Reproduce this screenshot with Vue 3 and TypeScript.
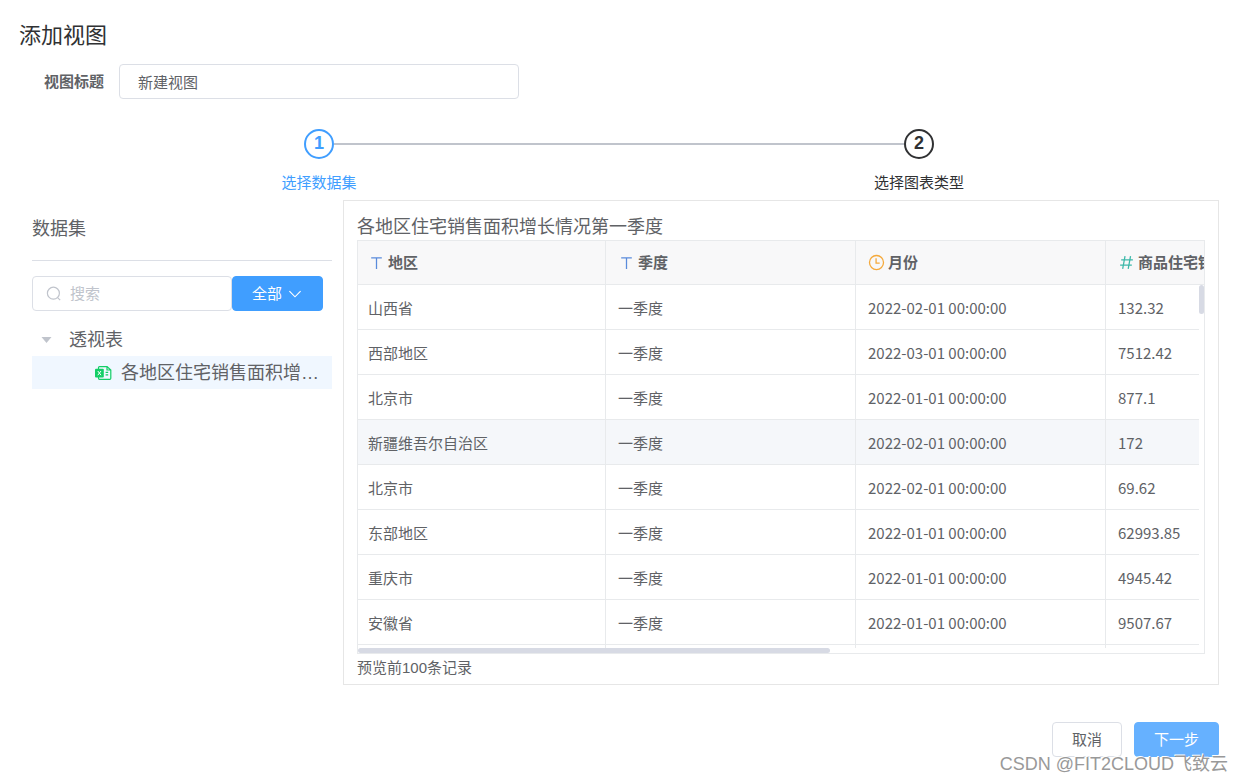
<script setup lang="ts">
import { ref } from 'vue'

type FieldKind = 'text' | 'time' | 'number'

interface Column {
  label: string
  kind: FieldKind
}

const viewTitle = ref('新建视图')
const keyword = ref('')

const steps = [
  { no: 1, label: '选择数据集', active: true },
  { no: 2, label: '选择图表类型', active: false },
]

const columns: Column[] = [
  { label: '地区', kind: 'text' },
  { label: '季度', kind: 'text' },
  { label: '月份', kind: 'time' },
  { label: '商品住宅销售面积', kind: 'number' },
]

const activeRow = 3
const rows: string[][] = [
  ['山西省', '一季度', '2022-02-01 00:00:00', '132.32'],
  ['西部地区', '一季度', '2022-03-01 00:00:00', '7512.42'],
  ['北京市', '一季度', '2022-01-01 00:00:00', '877.1'],
  ['新疆维吾尔自治区', '一季度', '2022-02-01 00:00:00', '172'],
  ['北京市', '一季度', '2022-02-01 00:00:00', '69.62'],
  ['东部地区', '一季度', '2022-01-01 00:00:00', '62993.85'],
  ['重庆市', '一季度', '2022-01-01 00:00:00', '4945.42'],
  ['安徽省', '一季度', '2022-01-01 00:00:00', '9507.67'],
  ['', '', '', ''],
]
</script>

<template>
  <main class="dialog">
    <h1 class="dialog-title">添加视图</h1>

    <div class="form-row">
      <label for="view-title">视图标题</label>
      <input id="view-title" v-model="viewTitle" class="field title-field" type="text" />
    </div>

    <ol class="steps">
      <li v-for="s in steps" :key="s.no" class="step" :class="{ active: s.active }">
        <span class="step-no">{{ s.no }}</span>
        <span class="step-label">{{ s.label }}</span>
      </li>
    </ol>

    <div class="body">
      <aside class="side">
        <h2 class="side-title">数据集</h2>
        <div class="search-row">
          <div class="search">
            <svg class="search-icon" viewBox="0 0 16 16" aria-hidden="true">
              <circle cx="7.4" cy="7.2" r="6" />
              <path d="M11.6 11.6 14.2 14.2" />
            </svg>
            <input v-model="keyword" class="field search-field" type="text" placeholder="搜索" aria-label="搜索" />
          </div>
          <button class="btn filter" type="button">
            全部
            <svg viewBox="0 0 12 12" aria-hidden="true"><path d="M1.2 3.6 6 8.4l4.8-4.8" /></svg>
          </button>
        </div>
        <div class="tree" role="tree">
          <div class="node" role="treeitem" aria-expanded="true">
            <svg class="caret" viewBox="0 0 10 6" aria-hidden="true"><path d="M0 0h10L5 6z" /></svg>
            <span class="node-text">透视表</span>
          </div>
          <div class="node leaf" role="treeitem" aria-selected="true">
            <svg class="excel" viewBox="0 0 17 16" aria-hidden="true">
              <path class="line" d="M3.5 4V2.6c0-.6.4-1 1-1h7.6L15.8 5v8.2c0 .7-.4 1.1-1 1.1H4.5c-.6 0-1-.4-1-1V12M12 1.6V5h3.8M10.6 7.4h2.6M10.6 9.8h2.6" />
              <rect class="fill" x="0" y="3.8" width="8.8" height="8.6" rx="1" />
              <path class="cross" d="m2.8 6 3.2 4.2M6 6l-3.2 4.2" />
            </svg>
            <span class="node-text">各地区住宅销售面积增长情况第一季度</span>
          </div>
        </div>
      </aside>

      <section class="panel">
        <h2 class="panel-title">各地区住宅销售面积增长情况第一季度</h2>
        <div class="grid">
          <table>
            <colgroup>
              <col class="col-first" />
              <col v-for="n in 3" :key="n" class="col" />
            </colgroup>
            <thead>
              <tr>
                <th v-for="c in columns" :key="c.label" scope="col">
                  <span class="head">
                    <svg v-if="c.kind === 'text'" class="kind text" viewBox="0 0 16 16" aria-hidden="true">
                      <path d="M3 3.6h10M8 3.6V14" />
                    </svg>
                    <svg v-else-if="c.kind === 'time'" class="kind time" viewBox="0 0 16 16" aria-hidden="true">
                      <circle cx="8" cy="8" r="6.6" />
                      <path d="M7.6 4v4.6H11" />
                    </svg>
                    <svg v-else class="kind number" viewBox="0 0 16 16" aria-hidden="true">
                      <path d="M6.6 2 4.4 14M11.8 2 9.6 14M3 5.5h11M2 10.5h11" />
                    </svg>
                    {{ c.label }}
                  </span>
                </th>
              </tr>
            </thead>
            <tbody>
              <tr v-for="(r, i) in rows" :key="i" :class="{ hover: i === activeRow }">
                <td v-for="(v, j) in r" :key="j">{{ v }}</td>
              </tr>
            </tbody>
          </table>
          <div class="track-v"><div class="thumb"></div></div>
          <div class="track-h"><div class="thumb"></div></div>
        </div>
        <p class="note">预览前100条记录</p>
      </section>
    </div>

    <footer class="footer">
      <button class="btn cancel" type="button">取消</button>
      <button class="btn next" type="button">下一步</button>
    </footer>
    <div class="watermark">CSDN @FIT2CLOUD飞致云</div>
  </main>
</template>

<style>
body {
  margin: 0;
  background: #fff;
}
</style>

<style scoped>
* {
  box-sizing: border-box;
}
.dialog {
  position: relative;
  min-height: 100vh;
  padding: 21px 24px 0 19px;
  overflow: hidden;
  font-family: "Liberation Sans", "Noto Sans CJK SC", sans-serif;
  font-size: 15px;
  line-height: 20px;
  color: #606266;
}
h1,
h2,
p,
ol {
  margin: 0;
  padding: 0;
  font-weight: 400;
}
.dialog-title {
  font-size: 22px;
  line-height: 30px;
  color: #303133;
}
.form-row {
  display: flex;
  align-items: center;
  margin-top: 13px;
}
.form-row label {
  width: 100px;
  padding-right: 15px;
  text-align: right;
  font-weight: 700;
}
.field {
  height: 35px;
  border: 1px solid #dcdfe6;
  border-radius: 4px;
  background: #fff;
  font: inherit;
  color: #606266;
  outline: none;
}
.title-field {
  width: 400px;
  padding: 0 18px 1px;
}
.steps {
  display: flex;
  margin-top: 30px;
  list-style: none;
}
.step {
  position: relative;
  flex: 1;
  display: flex;
  flex-direction: column;
  align-items: center;
  gap: 14px;
  color: #303133;
}
.step.active {
  color: #409eff;
}
.step:first-child::after {
  content: "";
  position: absolute;
  top: 14px;
  left: calc(50% + 15px);
  width: calc(100% - 30px);
  height: 2px;
  background: #c0c4cc;
}
.step-no {
  width: 30px;
  height: 30px;
  border: 2px solid currentColor;
  border-radius: 50%;
  text-align: center;
  font-size: 18px;
  font-weight: 700;
  line-height: 25px;
}
.step-label {
  line-height: 20px;
}
.body {
  display: flex;
  margin-top: 7px;
}
.side {
  width: 324px;
  padding: 0 11px 0 13px;
}
.side-title {
  padding: 17px 0 18px;
  border-bottom: 1px solid #dcdfe6;
  font-size: 18px;
  line-height: 25px;
}
.search-row {
  display: flex;
  margin-top: 15px;
}
.search {
  position: relative;
  width: 200px;
}
.search-icon {
  position: absolute;
  top: 10px;
  left: 14px;
  width: 16px;
  height: 16px;
  fill: none;
  stroke: #c0c4cc;
  stroke-width: 1.2;
}
.search-field {
  width: 100%;
  padding: 0 10px 0 37px;
}
.search-field::placeholder {
  color: #c0c4cc;
  opacity: 1;
}
.btn {
  height: 35px;
  padding: 0 19px;
  border: 1px solid #409eff;
  border-radius: 4px;
  background: #409eff;
  font: inherit;
  color: #fff;
  cursor: pointer;
}
.filter {
  display: flex;
  align-items: center;
  gap: 6px;
  width: 91px;
}
.filter svg {
  flex: none;
  width: 14px;
  height: 14px;
  fill: none;
  stroke: #fff;
  stroke-width: 1;
}
.tree {
  margin-top: 12px;
  font-size: 18px;
}
.node {
  display: flex;
  align-items: center;
  height: 33px;
  padding: 0 12px 0 9px;
}
.caret {
  width: 11px;
  height: 6px;
  margin-right: 17px;
  fill: #c0c4cc;
}
.leaf {
  padding-left: 63px;
  background: #f0f7ff;
}
.excel {
  flex: none;
  width: 17px;
  height: 16px;
  margin-right: 9px;
}
.excel path {
  fill: none;
}
.excel .line {
  stroke: #13ce66;
  stroke-width: 1.2;
}
.excel .fill {
  fill: #13ce66;
}
.excel .cross {
  stroke: #fff;
  stroke-width: 1;
}
.node-text {
  overflow: hidden;
  line-height: 28px;
  text-overflow: ellipsis;
  white-space: nowrap;
}
.panel {
  flex: 1;
  min-width: 0;
  padding: 14px 13px 6px;
  border: 1px solid #e6e6e6;
}
.panel-title {
  font-size: 18px;
  line-height: 25px;
}
.grid {
  position: relative;
  height: calc(100vh - 368px);
  min-height: 200px;
  overflow: hidden;
  border: 1px solid #e8eaec;
}
table {
  width: 998px;
  border-spacing: 0;
  table-layout: fixed;
}
.col-first {
  width: 248px;
}
.col {
  width: 250px;
}
th,
td {
  height: 45px;
  padding: 2px 12px 0;
  border-right: 1px solid #e8eaec;
  border-bottom: 1px solid #e8eaec;
  text-align: left;
  white-space: nowrap;
}
td {
  font-family: "Noto Sans CJK SC", sans-serif;
}
th {
  height: 44px;
  padding-top: 0;
  background: #f8f8f9;
  font-weight: 700;
}
th:first-child,
td:first-child {
  padding-left: 10px;
}
.hover td {
  background: #f5f7fa;
}
.head {
  display: flex;
  align-items: center;
  gap: 3px;
}
.kind {
  flex: none;
  width: 17px;
  height: 17px;
  fill: none;
  stroke-width: 1.2;
}
.text {
  stroke: #5a8bdc;
}
.time {
  stroke: #f5a93b;
}
.number {
  stroke: #3cb8a9;
}
.track-v,
.track-h {
  position: absolute;
  right: 0;
  bottom: 0;
  background: #fff;
}
.track-v {
  top: 44px;
  width: 5px;
}
.track-h {
  left: 0;
  height: 5px;
}
.thumb {
  border-radius: 3px;
  background: #d7dae4;
}
.track-v .thumb {
  height: 29px;
}
.track-h .thumb {
  width: 472px;
  height: 5px;
}
.note {
  margin-top: 4px;
}
.footer {
  display: flex;
  justify-content: flex-end;
  gap: 12px;
  margin-top: 37px;
}
.cancel {
  border-color: #dcdfe6;
  background: #fff;
  color: #606266;
}
.next {
  border-color: #66b1ff;
  background: #66b1ff;
}
.watermark {
  position: absolute;
  right: 15px;
  bottom: 4px;
  font-size: 18px;
  line-height: 28px;
  color: #999;
  text-shadow: -1px -1px 0 #fff;
  pointer-events: none;
}
</style>
